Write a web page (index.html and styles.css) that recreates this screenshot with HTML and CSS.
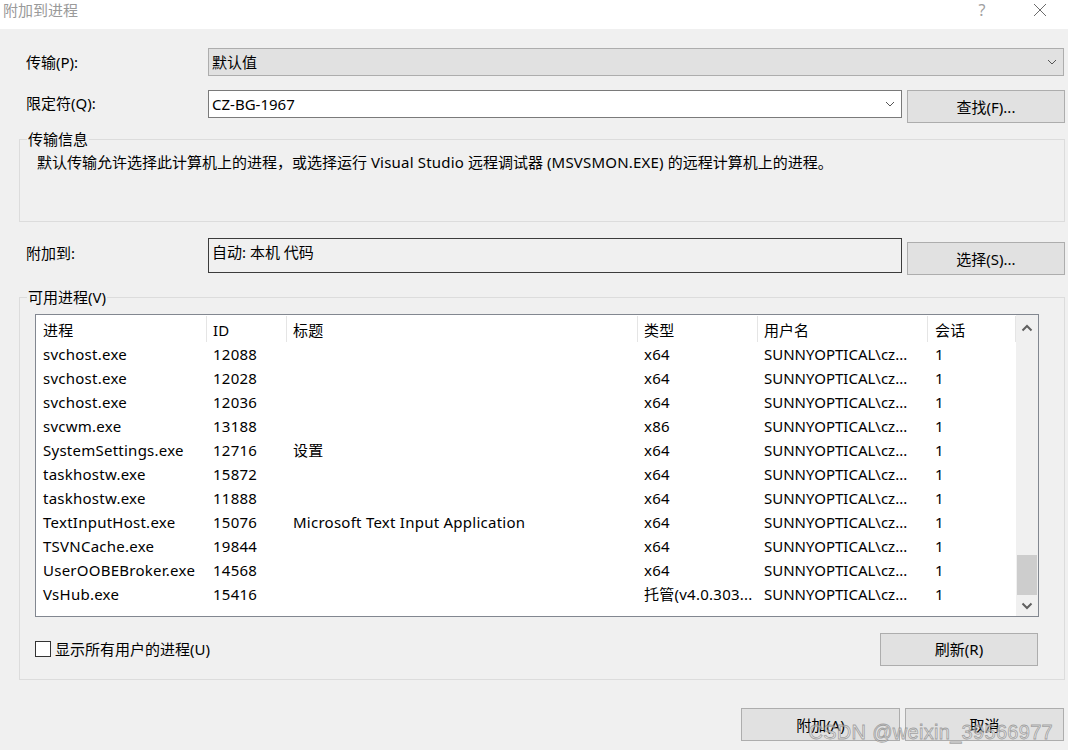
FILE: index.html
```html
<!DOCTYPE html>
<html lang="zh">
<head>
<meta charset="utf-8">
<title>附加到进程</title>
<link rel="stylesheet" href="styles.css">
</head>
<body>
<div class="window">
  <div class="titlebar">
    <span class="title">附加到进程</span>
    <span class="tb-help">?</span>
    <span class="tb-close"><svg width="14" height="14" viewBox="0 0 14 14"><path d="M1 1 L13 13 M13 1 L1 13" stroke="#6b6b6b" stroke-width="1" fill="none"/></svg></span>
  </div>

  <div class="row row-transport">
    <span class="label">传输(P):</span>
    <div class="combo">
      <span class="combo-text">默认值</span>
      <svg class="chev" width="10" height="6" viewBox="0 0 10 6"><path d="M1 1 L5 5 L9 1" stroke="#555" stroke-width="1" fill="none"/></svg>
    </div>
  </div>

  <div class="row row-qualifier">
    <span class="label">限定符(Q):</span>
    <div class="input">
      <span class="combo-text">CZ-BG-1967</span>
      <svg class="chev" width="10" height="6" viewBox="0 0 10 6"><path d="M1 1 L5 5 L9 1" stroke="#555" stroke-width="1" fill="none"/></svg>
    </div>
    <div class="btn btn-side">查找(F)...</div>
  </div>

  <fieldset class="group group-info">
    <legend>传输信息</legend>
    <p class="info-text">默认传输允许选择此计算机上的进程，或选择运行 <span class="lat">Visual Studio</span> 远程调试器 <span class="lat">(MSVSMON.EXE)</span> 的远程计算机上的进程。</p>
  </fieldset>

  <div class="row row-attach">
    <span class="label">附加到:</span>
    <div class="attach-box">自动: 本机 代码</div>
    <div class="btn btn-side btn-select">选择(S)...</div>
  </div>

  <fieldset class="group group-procs">
    <legend>可用进程(V)</legend>
    <div class="list">
      <div class="list-main">
        <div class="lrow lhead">
          <span class="c c1">进程</span><span class="c c2">ID</span><span class="c c3">标题</span><span class="c c4">类型</span><span class="c c5">用户名</span><span class="c c6">会话</span>
        </div>
        <div class="lrow"><span class="c c1">svchost.exe</span><span class="c c2">12088</span><span class="c c3"></span><span class="c c4">x64</span><span class="c c5">SUNNYOPTICAL\cz...</span><span class="c c6">1</span></div>
        <div class="lrow"><span class="c c1">svchost.exe</span><span class="c c2">12028</span><span class="c c3"></span><span class="c c4">x64</span><span class="c c5">SUNNYOPTICAL\cz...</span><span class="c c6">1</span></div>
        <div class="lrow"><span class="c c1">svchost.exe</span><span class="c c2">12036</span><span class="c c3"></span><span class="c c4">x64</span><span class="c c5">SUNNYOPTICAL\cz...</span><span class="c c6">1</span></div>
        <div class="lrow"><span class="c c1">svcwm.exe</span><span class="c c2">13188</span><span class="c c3"></span><span class="c c4">x86</span><span class="c c5">SUNNYOPTICAL\cz...</span><span class="c c6">1</span></div>
        <div class="lrow"><span class="c c1">SystemSettings.exe</span><span class="c c2">12716</span><span class="c c3">设置</span><span class="c c4">x64</span><span class="c c5">SUNNYOPTICAL\cz...</span><span class="c c6">1</span></div>
        <div class="lrow"><span class="c c1">taskhostw.exe</span><span class="c c2">15872</span><span class="c c3"></span><span class="c c4">x64</span><span class="c c5">SUNNYOPTICAL\cz...</span><span class="c c6">1</span></div>
        <div class="lrow"><span class="c c1">taskhostw.exe</span><span class="c c2">11888</span><span class="c c3"></span><span class="c c4">x64</span><span class="c c5">SUNNYOPTICAL\cz...</span><span class="c c6">1</span></div>
        <div class="lrow"><span class="c c1">TextInputHost.exe</span><span class="c c2">15076</span><span class="c c3">Microsoft Text Input Application</span><span class="c c4">x64</span><span class="c c5">SUNNYOPTICAL\cz...</span><span class="c c6">1</span></div>
        <div class="lrow"><span class="c c1">TSVNCache.exe</span><span class="c c2">19844</span><span class="c c3"></span><span class="c c4">x64</span><span class="c c5">SUNNYOPTICAL\cz...</span><span class="c c6">1</span></div>
        <div class="lrow"><span class="c c1">UserOOBEBroker.exe</span><span class="c c2">14568</span><span class="c c3"></span><span class="c c4">x64</span><span class="c c5">SUNNYOPTICAL\cz...</span><span class="c c6">1</span></div>
        <div class="lrow"><span class="c c1">VsHub.exe</span><span class="c c2">15416</span><span class="c c3"></span><span class="c c4">托管(v4.0.303...</span><span class="c c5">SUNNYOPTICAL\cz...</span><span class="c c6">1</span></div>
      </div>
      <div class="scrollbar">
        <div class="sb-arrow sb-up"><svg width="12" height="8" viewBox="0 0 12 8"><path d="M1.5 6.5 L6 2 L10.5 6.5" stroke="#606060" stroke-width="2" fill="none"/></svg></div>
        <div class="sb-track"><div class="sb-thumb"></div></div>
        <div class="sb-arrow sb-down"><svg width="12" height="8" viewBox="0 0 12 8"><path d="M1.5 1.5 L6 6 L10.5 1.5" stroke="#606060" stroke-width="2" fill="none"/></svg></div>
      </div>
    </div>
    <div class="procs-foot">
      <label class="check"><span class="box"></span><span>显示所有用户的进程(U)</span></label>
      <div class="btn btn-refresh">刷新(R)</div>
    </div>
  </fieldset>

  <div class="actions">
    <div class="btn btn-action">附加(A)</div>
    <div class="btn btn-action">取消</div>
  </div>

  <div class="watermark">CSDN @weixin_39566977</div>
</div>
</body>
</html>
```

FILE: styles.css
```css
* { box-sizing: border-box; }
html, body { margin: 0; padding: 0; }
body {
  width: 1068px;
  height: 750px;
  overflow: hidden;
  background: #f0f0f0;
  font-family: "Noto Sans", "Noto Sans CJK SC", sans-serif;
  font-size: 15px;
  color: #000;
}
.window {
  position: relative;
  width: 1068px;
  height: 750px;
}
.titlebar {
  height: 29px;
  background: #fff;
  display: flex;
  align-items: flex-start;
  padding: 0 0 0 3px;
}
.title {
  color: #9a9a9a;
  font-size: 15px;
  line-height: 20px;
  flex: 1;
}
.tb-help {
  color: #a0a0a0;
  font-size: 16px;
  line-height: 20px;
  width: 20px;
  text-align: center;
  margin-right: 41px;
}
.tb-close {
  width: 14px;
  height: 14px;
  margin-top: 3px;
  margin-right: 21px;
  display: flex;
}

.row {
  display: flex;
  align-items: center;
  padding-left: 26px;
}
.label {
  width: 182px;
  flex: none;
  line-height: 20px;
}
.row-transport {
  margin-top: 19px;
  height: 28px;
}
.combo {
  width: 856px;
  height: 28px;
  background: #e1e1e1;
  border: 1px solid #adadad;
  display: flex;
  align-items: center;
  padding: 0 6px 0 3px;
}
.combo-text { flex: 1; line-height: 20px; }
.chev { flex: none; }

.row-qualifier {
  margin-top: 14px;
  height: 33px;
  align-items: flex-start;
}
.row-qualifier .label { margin-top: 3px; }
.input {
  width: 694px;
  height: 28px;
  background: #fff;
  border: 1px solid #7a7a7a;
  display: flex;
  align-items: center;
  padding: 0 6px 0 3px;
}
.btn {
  background: #e1e1e1;
  border: 1px solid #adadad;
  display: flex;
  align-items: center;
  justify-content: center;
  line-height: 20px;
}
.btn-side {
  width: 158px;
  height: 33px;
  margin-left: 5px;
}

.group {
  border: 1px solid #dcdcdc;
  padding: 0;
  min-width: 0;
  margin: 0 3px 0 19px;
}
.group legend {
  padding: 0 1px;
  margin-left: 7px;
  line-height: 20px;
}
.group-info { margin-top: 6px; }
.info-text {
  margin: 3px 0 0 0;
  padding-left: 17px;
  line-height: 20px;
  height: 69px;
}
.lat { letter-spacing: 0.2px; }

.row-attach {
  margin-top: 16px;
  height: 37px;
  align-items: flex-start;
}
.row-attach .label { margin-top: 5px; }
.attach-box {
  width: 694px;
  height: 35px;
  border: 1px solid #3c3c3c;
  padding: 3px 0 0 3px;
  line-height: 20px;
}
.btn-select {
  margin-top: 4px;
}

.group-procs { margin-top: 12px; }
.list {
  margin: 7px 0 0 15px;
  width: 1004px;
  height: 303px;
  border: 1px solid #828790;
  background: #fff;
  display: flex;
}
.list-main {
  width: 980px;
  overflow: hidden;
}
.lrow {
  display: flex;
  height: 24px;
  align-items: center;
  white-space: nowrap;
}
.lhead {
  height: 27px;
  padding-top: 1px;
  align-items: stretch;
}
.c {
  flex: none;
  padding-left: 7px;
  line-height: 20px;
  overflow: hidden;
  letter-spacing: 0.25px;
}
.lhead .c {
  border-right: 1px solid #e5e5e5;
  display: flex;
  align-items: center;
  padding-top: 1px;
}
.c1 { width: 171px; }
.c2 { width: 80px; padding-left: 6px; }
.c3 { width: 351px; padding-left: 6px; }
.c4 { width: 120px; padding-left: 6px; }
.c5 { width: 170px; padding-left: 6px; letter-spacing: 0; }
.c6 { width: 88px; padding-left: 7px; }

.scrollbar {
  width: 22px;
  background: #f0f0f0;
  display: flex;
  flex-direction: column;
}
.sb-arrow {
  height: 25px;
  display: flex;
  align-items: center;
  justify-content: center;
}
.sb-down { height: 21px; }
.sb-track { flex: 1; }
.sb-thumb {
  margin: 215px 1px 0 1px;
  height: 40px;
  background: #cdcdcd;
}

.procs-foot {
  display: flex;
  align-items: center;
  justify-content: space-between;
  margin: 16px 26px 14px 15px;
  height: 32px;
}
.check {
  display: flex;
  align-items: center;
  line-height: 20px;
}
.box {
  width: 16px;
  height: 16px;
  border: 1px solid #333;
  background: #fff;
  margin-right: 4px;
}
.btn-refresh {
  width: 158px;
  height: 33px;
}

.actions {
  display: flex;
  justify-content: flex-end;
  gap: 5px;
  margin-top: 28px;
  padding-right: 4px;
}
.btn-action {
  width: 159px;
  height: 33px;
}

.watermark {
  position: absolute;
  right: 15px;
  bottom: 6px;
  font-family: "Liberation Sans", "Noto Sans", sans-serif;
  font-size: 20px;
  color: rgba(235, 235, 235, 0.5);
  -webkit-text-stroke: 0.8px rgba(130, 130, 130, 0.7);
  letter-spacing: 0.3px;
}
```
